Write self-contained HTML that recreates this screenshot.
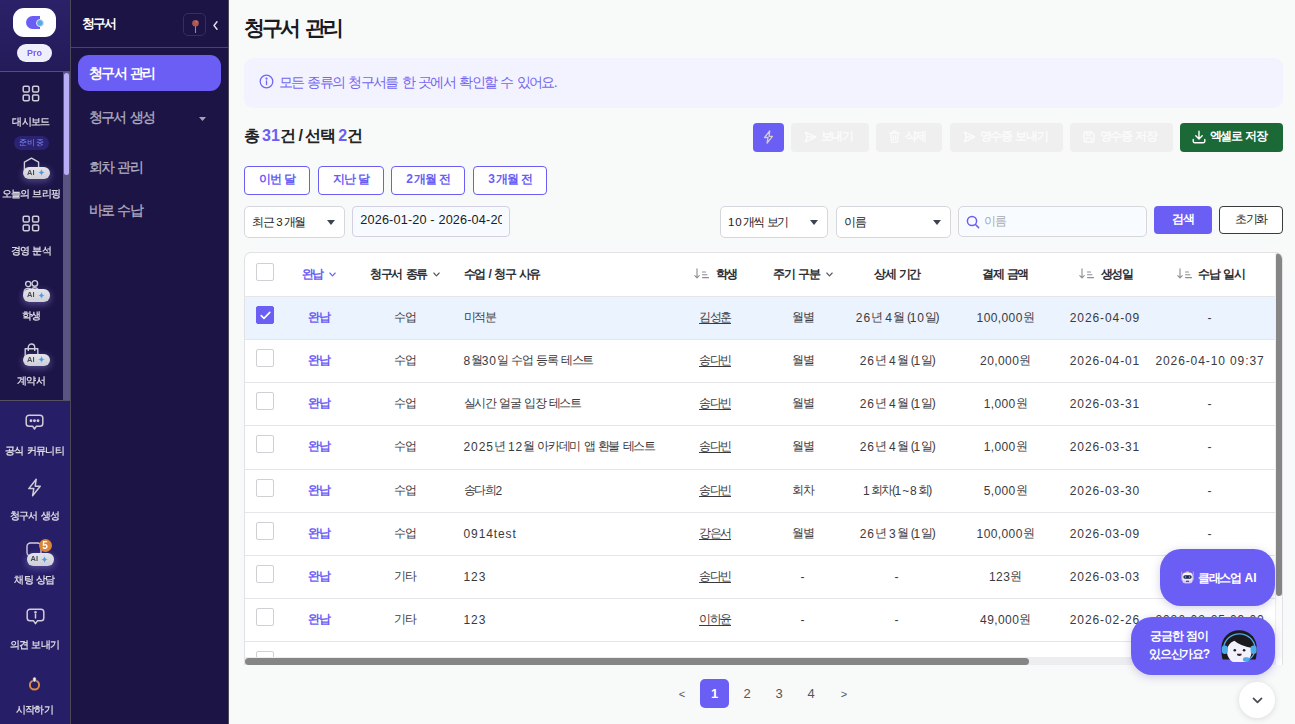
<!DOCTYPE html>
<html lang="ko">
<head>
<meta charset="utf-8">
<title>청구서 관리</title>
<style>
*{box-sizing:border-box;margin:0;padding:0}
html,body{width:1295px;height:724px;overflow:hidden}
body{position:relative;word-spacing:1.6px;background:#f8f9f9;font-family:"Liberation Sans",sans-serif;color:#222;font-size:13px}
.abs{position:absolute}
svg{display:block}
/* ---------- rail ---------- */
#rail{will-change:transform;opacity:.999;position:absolute;left:0;top:0;width:71px;height:724px;background:#1c1547;border-right:1px solid #4b4658}
#rail .top{position:absolute;left:0;top:0;width:70px;height:72px;background:linear-gradient(180deg,#2a2168 0%,#231b59 100%);border-bottom:1px solid #57525f}
#logo{position:absolute;left:13px;top:8px;width:43px;height:29px;background:#fff;border-radius:11px}
#logo i{position:absolute;left:13px;top:8px;width:14px;height:13px;background:#6b5ef5;border-radius:6.5px 0 0 6.5px}
#logo b{position:absolute;left:23px;top:10.5px;width:8px;height:8px;border-radius:50%;background:#5aa9e6;border:1px solid #dfe9fb}
#pro{position:absolute;left:17px;top:44px;width:35px;height:18px;border-radius:9px;background:#efeffd;color:#6b5ef5;font-weight:700;font-size:9px;line-height:18px;text-align:center}
#rail .track{position:absolute;left:63px;top:72px;width:7px;height:328px;background:#5a5482}
#rail .thumb{position:absolute;left:64px;top:73px;width:5px;height:102px;background:#b9aef6;border-radius:3px}
#rail .bottom{position:absolute;left:0;top:400px;width:70px;height:324px;background:#261e66;border-top:1px solid #57525f}
.ri{position:absolute;left:0;width:62px;text-align:center;color:#d9d6e1;font-weight:700;font-size:10px;letter-spacing:-.7px;word-spacing:.8px;line-height:12px;white-space:nowrap}
.ri.b{width:69px}
.ric{position:absolute}
.aib{position:absolute;width:27px;height:12.5px;border-radius:6.25px;background:linear-gradient(180deg,#e3e3e9,#cfcfd8);box-shadow:0 2px 6px 1px rgba(150,135,220,.4);font-size:7.5px;font-weight:700;color:#4a4a55;line-height:12.5px;text-align:left;padding-left:4px;letter-spacing:0}
.aib svg{position:absolute;left:14.5px;top:2.8px}
/* ---------- nav ---------- */
#nav{position:absolute;left:71px;top:0;width:158px;height:724px;background:#1b1444;border-right:1px solid #514c59}
#nav .hd{position:absolute;left:0;top:0;width:157px;height:48px;border-bottom:1px solid #4b4658}
#nav .hd .t{position:absolute;left:11px;top:16px;font-size:13px;font-weight:700;color:#fff;letter-spacing:-2.1px;line-height:16px}
#nav .pin{position:absolute;left:112px;top:13px;width:23px;height:23px;border:1px solid #362f5e;border-radius:5px}
#nav .act{position:absolute;left:7px;top:55px;width:143px;height:36px;border-radius:11px;background:#6b5ef5;color:#fff;font-weight:700;font-size:14px;line-height:36px;padding-left:11px;letter-spacing:-1.6px}
#nav .it{-webkit-text-stroke:.3px #b1adc2;position:absolute;left:17.5px;font-size:14px;color:#b1adc2;line-height:18px;letter-spacing:-1.6px}
/* ---------- main ---------- */
#main{position:absolute;left:229px;top:0;width:1066px;height:724px}
h1{position:absolute;left:15px;top:13.5px;font-size:21px;line-height:28px;font-weight:700;color:#1a1a1f;letter-spacing:-2.9px;word-spacing:3.4px;white-space:nowrap}
#banner{position:absolute;left:15px;top:58px;width:1039px;height:50px;border-radius:9px;background:#f3f2ff;color:#7367f0;font-size:14px;line-height:49.5px;padding-left:34.5px;letter-spacing:-1.6px;white-space:nowrap}
#banner svg{position:absolute;left:14.5px;top:16px}
#cnt{position:absolute;left:14.5px;top:125px;font-size:16px;font-weight:700;line-height:22px;color:#222;letter-spacing:-1.75px;white-space:nowrap}
#cnt em{font-style:normal;color:#6b5ef5;letter-spacing:0}

/* ---------- action buttons ---------- */
.btn{position:absolute;top:123px;height:29px;border-radius:4px;font-size:12px;font-weight:700;line-height:27.5px;white-space:nowrap;letter-spacing:-1.3px}
.btn.dis{background:#efefef;color:#fbfbfb}
.btn svg{position:absolute}
.btn span{position:absolute;top:0}
.qb{position:absolute;top:166px;height:29px;border:1px solid #6b5ef5;border-radius:4px;background:#fff;color:#6b5ef5;font-size:12px;font-weight:700;line-height:25px;text-align:center;letter-spacing:-1.3px;white-space:nowrap}
.sel{position:absolute;top:206px;height:32px;border:1px solid #d6d6dc;border-radius:5px;background:#fff;font-size:11.5px;line-height:30.5px;padding-left:7px;color:#222;letter-spacing:-1.5px;white-space:nowrap;overflow:hidden}
.sel:after{content:"";position:absolute;right:9px;top:13px;border:4px solid transparent;border-top:5px solid #3d4450;border-bottom:0}

/* ---------- table ---------- */
#tbl{position:absolute;left:15px;top:252px;width:1039px;height:413px;border:1px solid #e2e2e6;border-bottom:0;border-radius:7px 7px 0 0;background:#fff;overflow:hidden}
.row{position:absolute;left:0;width:1031px;height:43.13px;border-bottom:1px solid #e6e6ea;font-size:12px;color:#3a3a40;letter-spacing:-1.35px;white-space:nowrap}
.row.on{background:#ebf3ff}
.row.hd{font-weight:700;color:#2e2e33}
.c{position:absolute;top:0;height:100%;line-height:43px;text-align:center}
.c.l{text-align:left}
.row.hd .c{line-height:43px}
.row .c{line-height:41px}
.n{letter-spacing:.9px;word-spacing:0;font-style:normal}
.cb{position:absolute;left:11px;width:18px;height:18px;border:1px solid #cfcfd4;border-radius:2px;background:#fff}
.cb.on{background:#6b5ef5;border-color:#6b5ef5}
.pd{color:#6b5ef5;font-weight:700}
.u{text-decoration:underline;text-underline-offset:2px}
.car{display:inline-block;vertical-align:middle;margin-left:6px;margin-top:-1px}
.srt{display:inline-block;vertical-align:middle;margin-right:6.5px;margin-left:1.5px;margin-top:-2px}
.n2 .n{letter-spacing:.4px}
.row .n{position:relative;top:1px}
</style>
</head>
<body>
<!-- RAIL -->
<div id="rail">
  <div class="top"><div id="logo"><i></i><b></b></div><div id="pro">Pro</div></div>
  <div class="track"></div><div class="thumb"></div>
  <div class="bottom"></div>
  <!-- scroll items -->
  <svg class="ric" style="left:22px;top:84.5px" width="18" height="17" viewBox="0 0 18 17" fill="none" stroke="#d0cdd9" stroke-width="1.5"><rect x="1.2" y="1.2" width="6" height="5.8" rx="1.2"/><rect x="10.6" y="1.2" width="6" height="5.8" rx="1.2"/><rect x="1.2" y="10" width="6" height="5.8" rx="1.2"/><rect x="10.6" y="10" width="6" height="5.8" rx="1.2"/></svg>
  <div class="ri" style="top:116px">대시보드</div>
  <div class="abs" style="left:13.5px;top:136px;width:35.5px;height:14px;border-radius:7px;background:#2b2272;color:#7d8bf7;font-size:8px;line-height:14px;text-align:center;letter-spacing:-.7px;word-spacing:.5px;font-weight:400">준비 중</div>
  <svg class="ric" style="left:22.5px;top:157px" width="17" height="19" viewBox="0 0 17 19" fill="none" stroke="#d0cdd9" stroke-width="1.4" stroke-linejoin="round"><path d="M8.5 1.2 15.6 5.2V14L8.5 17.8 1.4 14V5.2Z"/></svg>
  <div class="aib" style="left:23px;top:166.5px">AI<svg width="7" height="7" viewBox="0 0 10 10"><path d="M5 0C5.4 3 7 4.6 10 5 7 5.4 5.4 7 5 10 4.6 7 3 5.4 0 5 3 4.6 4.6 3 5 0Z" fill="#4f9be8"/></svg></div>
  <div class="ri" style="top:188px">오늘의 브리핑</div>
  <svg class="ric" style="left:22px;top:214.5px" width="18" height="17" viewBox="0 0 18 17" fill="none" stroke="#d0cdd9" stroke-width="1.5"><rect x="1.2" y="1.2" width="6" height="5.8" rx="1.2"/><rect x="10.6" y="1.2" width="6" height="5.8" rx="1.2"/><rect x="1.2" y="10" width="6" height="5.8" rx="1.2"/><rect x="10.6" y="10" width="6" height="5.8" rx="1.2"/></svg>
  <div class="ri" style="top:245px">경영 분석</div>
  <svg class="ric" style="left:22.5px;top:279px" width="17" height="16" viewBox="0 0 17 16" fill="none" stroke="#d0cdd9" stroke-width="1.4"><circle cx="5.2" cy="5" r="2.6"/><circle cx="11.8" cy="4.4" r="2.8"/><path d="M1 14c0-3 2-4.6 4.2-4.6S9.4 11 9.4 14M8 13.5c0-3 1.8-4.8 3.8-4.8s4.2 1.8 4.2 4.8"/></svg>
  <div class="aib" style="left:23px;top:289px">AI<svg width="7" height="7" viewBox="0 0 10 10"><path d="M5 0C5.4 3 7 4.6 10 5 7 5.4 5.4 7 5 10 4.6 7 3 5.4 0 5 3 4.6 4.6 3 5 0Z" fill="#4f9be8"/></svg></div>
  <div class="ri" style="top:310px">학생</div>
  <svg class="ric" style="left:23.5px;top:343px" width="15" height="17" viewBox="0 0 15 17" fill="none" stroke="#d0cdd9" stroke-width="1.4" stroke-linejoin="round"><path d="M1.2 5.8h12.6v10.2H1.2z"/><path d="M4.3 8V4.2a3.2 3.2 0 0 1 6.4 0V8"/></svg>
  <div class="aib" style="left:23px;top:353.5px">AI<svg width="7" height="7" viewBox="0 0 10 10"><path d="M5 0C5.4 3 7 4.6 10 5 7 5.4 5.4 7 5 10 4.6 7 3 5.4 0 5 3 4.6 4.6 3 5 0Z" fill="#4f9be8"/></svg></div>
  <div class="ri" style="top:375px">계약서</div>

  <!-- bottom items -->
  <svg class="ric" style="left:25px;top:414px" width="19" height="17" viewBox="0 0 19 17" fill="none" stroke="#d0cdd9" stroke-width="1.5" stroke-linejoin="round"><path d="M4 1.2h11a2.8 2.8 0 0 1 2.8 2.8v5.4a2.8 2.8 0 0 1-2.8 2.8h-3.6L9.5 15 7.6 12.2H4a2.8 2.8 0 0 1-2.800-2.8V4A2.8 2.8 0 0 1 4 1.2z"/><circle cx="6" cy="6.7" r=".7" fill="#d0cdd9"/><circle cx="9.5" cy="6.7" r=".7" fill="#d0cdd9"/><circle cx="13" cy="6.7" r=".7" fill="#d0cdd9"/></svg>
  <div class="ri b" style="top:445px">공식 커뮤니티</div>
  <svg class="ric" style="left:27px;top:477.5px" width="15" height="19" viewBox="0 0 15 19" fill="none" stroke="#d0cdd9" stroke-width="1.5" stroke-linejoin="round"><path d="M9.2 1.2 1.8 10.6h5L5.6 17.8 13.2 8.2H8.2z"/></svg>
  <div class="ri b" style="top:510px">청구서 생성</div>
  <svg class="ric" style="left:25.5px;top:541.5px" width="16" height="16" viewBox="0 0 16 16" fill="none" stroke="#d0cdd9" stroke-width="1.4"><rect x="1" y="1" width="14" height="13" rx="3.5"/></svg>
  <div class="aib" style="left:26.5px;top:553px">AI<svg width="7" height="7" viewBox="0 0 10 10"><path d="M5 0C5.4 3 7 4.6 10 5 7 5.4 5.4 7 5 10 4.6 7 3 5.4 0 5 3 4.6 4.6 3 5 0Z" fill="#4f9be8"/></svg></div>
  <div class="abs" style="left:38.5px;top:539px;width:13px;height:13px;border-radius:50%;background:#d9853b;color:#fff;font-size:10px;font-weight:700;line-height:13px;text-align:center">5</div>
  <div class="ri b" style="top:574px">채팅 상담</div>
  <svg class="ric" style="left:25.5px;top:607.5px" width="19" height="18" viewBox="0 0 19 18" fill="none" stroke="#d0cdd9" stroke-width="1.5" stroke-linejoin="round"><path d="M4 1.2h11a2.8 2.8 0 0 1 2.8 2.8v6a2.8 2.8 0 0 1-2.8 2.8h-3.6L9.5 15.6 7.6 12.8H4a2.8 2.8 0 0 1-2.800-2.8V4A2.8 2.8 0 0 1 4 1.2z"/><path d="M9.5 6.6v3.4" stroke-linecap="round"/><circle cx="9.5" cy="4.3" r=".6" fill="#d0cdd9"/></svg>
  <div class="ri b" style="top:639px">의견 보내기</div>
  <svg class="ric" style="left:28px;top:676px" width="13" height="15" viewBox="0 0 13 15" fill="none"><circle cx="6.5" cy="9" r="4.6" stroke="#d8894a" stroke-width="2"/><rect x="4.8" y="1" width="3.4" height="5" rx="1.7" fill="#f4f1f6" stroke="#3a3050" stroke-width=".7"/></svg>
  <div class="ri b" style="top:704px">시작하기</div>

</div>
<!-- NAV -->
<div id="nav">
  <div class="hd"><div class="t">청구서</div><div class="pin"><svg style="position:absolute;left:6.5px;top:4px" width="9" height="16" viewBox="0 0 9 16"><path d="M4.5 8v6.5" stroke="#8d86b5" stroke-width="1.1" stroke-linecap="round"/><circle cx="4.5" cy="5.2" r="3.3" fill="#b0584f"/><circle cx="5.6" cy="3.8" r=".8" fill="#9aa0c4"/></svg></div><svg style="position:absolute;left:141.5px;top:20.5px" width="5" height="9" viewBox="0 0 5 9" fill="none" stroke="#e6e2f2" stroke-width="1.4" stroke-linecap="round" stroke-linejoin="round"><path d="M4 .8 1 4.5 4 8.2"/></svg></div>
  <div class="act">청구서 관리</div>
  <div class="it" style="top:108px">청구서 생성</div>
  <svg style="position:absolute;left:127.5px;top:117px" width="7" height="4" viewBox="0 0 7 4"><path d="M0 0h7L3.5 4z" fill="#a7a2ba"/></svg>
  <div class="it" style="top:157.5px">회차 관리</div>
  <div class="it" style="top:201px">바로 수납</div>
</div>
<!-- MAIN -->
<div id="main">
  <h1>청구서 관리</h1>
  <div id="banner"><svg width="15" height="15" viewBox="0 0 15 15" fill="none" stroke="#7367f0" stroke-width="1.3"><circle cx="7.5" cy="7.5" r="6.3"/><path d="M7.5 6.8v3.8" stroke-linecap="round"/><circle cx="7.5" cy="4.6" r=".5" fill="#7367f0"/></svg>모든 종류의 청구서를 한 곳에서 확인할 수 있어요.</div>
  <div id="cnt">총 <em>31</em>건 / 선택 <em>2</em>건</div>

  <!-- action buttons -->
  <div class="btn" style="left:524px;width:31px;background:#6b5ef5"><svg style="left:10px;top:6.5px" width="11" height="14" viewBox="0 0 12 16" fill="none" stroke="#d2cec9" stroke-width="1.5" stroke-linejoin="round"><path d="M7.4 1 1.5 8.6h3.9L4.4 15 10.5 7.2H6.6z"/></svg></div>
  <div class="btn dis" style="left:562px;width:78px"><svg style="left:12.5px;top:7.5px" width="13" height="12" viewBox="0 0 13 12" fill="none" stroke="#fbfbfb" stroke-width="1.4" stroke-linejoin="round" stroke-linecap="round"><path d="M1.5 1.2 11.8 6 1.5 10.8 3.3 6z"/><path d="M3.3 6h5"/></svg><span style="left:29.5px">보내기</span></div>
  <div class="btn dis" style="left:647px;width:66px"><svg style="left:12.5px;top:7px" width="11" height="13" viewBox="0 0 11 13" fill="none" stroke="#fbfbfb" stroke-width="1.3" stroke-linecap="round" stroke-linejoin="round"><path d="M.8 3h9.4M3.8 3V1.2h3.4V3M1.8 3l.5 8.4a1 1 0 0 0 1 .9h4.4a1 1 0 0 0 1-.9L9.2 3M4.3 5.5v4.5M6.7 5.5v4.5"/></svg><span style="left:28.5px">삭제</span></div>
  <div class="btn dis" style="left:721px;width:113px"><svg style="left:12.5px;top:7.5px" width="13" height="12" viewBox="0 0 13 12" fill="none" stroke="#fbfbfb" stroke-width="1.4" stroke-linejoin="round" stroke-linecap="round"><path d="M1.5 1.2 11.8 6 1.5 10.8 3.3 6z"/><path d="M3.3 6h5"/></svg><span style="left:29.5px">영수증 보내기</span></div>
  <div class="btn dis" style="left:841px;width:103px"><svg style="left:12.5px;top:7.5px" width="12" height="12" viewBox="0 0 12 12" fill="none" stroke="#fbfbfb" stroke-width="1.3" stroke-linejoin="round"><path d="M1 2.2A1.2 1.2 0 0 1 2.2 1h6.2L11 3.6v6.2A1.2 1.2 0 0 1 9.8 11H2.2A1.2 1.2 0 0 1 1 9.8z"/><path d="M3.5 1v2.8h4V1M3.3 11V7.2h5.4V11"/></svg><span style="left:29.5px">영수증 저장</span></div>
  <div class="btn" style="left:951px;width:103px;background:#1a6937;color:#fff"><svg style="left:12px;top:6.5px" width="14" height="14" viewBox="0 0 14 14" fill="none" stroke="#fff" stroke-width="1.4" stroke-linecap="round" stroke-linejoin="round"><path d="M7 1.2v7.6M3.8 5.8 7 9l3.200-3.2M1.2 9.5v1.8a1.5 1.5 0 0 0 1.5 1.5h8.6a1.5 1.5 0 0 0 1.500-1.5V9.5"/></svg><span style="left:29.5px">엑셀로 저장</span></div>
  <!-- quick buttons -->
  <div class="qb" style="left:15px;width:66px">이번 달</div>
  <div class="qb" style="left:89px;width:66px">지난 달</div>
  <div class="qb" style="left:162px;width:74px"><i class="n">2</i>개월 전</div>
  <div class="qb" style="left:244px;width:74px"><i class="n">3</i>개월 전</div>
  <!-- filters -->
  <div class="sel" style="left:15px;width:101px">최근 <i class="n">3</i>개월</div>
  <div class="abs" style="left:123px;top:206px;width:158px;height:31px;border:1px solid #d3d0e6;border-radius:4px;background:#f7fbff"><div style="position:absolute;left:7.3px;top:0;width:141.5px;height:29px;overflow:hidden;font-size:12.7px;line-height:27.5px;color:#1c1c22;white-space:nowrap;letter-spacing:.15px;word-spacing:0">2026-01-20 - 2026-04-20</div></div>
  <div class="sel" style="left:491px;width:108px"><i class="n">10</i>개씩 보기</div>
  <div class="sel" style="left:607px;width:115px">이름</div>
  <div class="abs" style="left:729px;top:206px;width:189px;height:31px;border:1px solid #d6d6dc;border-radius:5px;background:#f8fbff;font-size:12px;line-height:29px;padding-left:25px;color:#a9a9b0;letter-spacing:-1.3px"><svg style="position:absolute;left:7px;top:8px" width="14" height="14" viewBox="0 0 14 14" fill="none" stroke="#6b5ef5" stroke-width="1.5" stroke-linecap="round"><circle cx="6" cy="6" r="4.6"/><path d="M9.5 9.5 12.6 12.6"/></svg>이름</div>
  <div class="abs" style="left:925px;top:206px;width:58px;height:28px;border-radius:4px;background:#6b5ef5;color:#fff;font-weight:700;font-size:12px;line-height:26px;text-align:center;letter-spacing:-1.3px">검색</div>
  <div class="abs" style="left:990px;top:206px;width:64px;height:28px;border-radius:4px;background:#fff;border:1px solid #3a3a3f;color:#222;font-size:12px;line-height:25px;text-align:center;letter-spacing:-1.3px">초기화</div>
<div id="tbl">
<div class="row hd" style="top:0;height:44px">
<div class="cb" style="top:10px"></div>
<div class="c" style="left:40px;width:68px"><span class="pd">완납</span><svg class="car" width="7" height="5" viewBox="0 0 7 5" fill="none" stroke="#6b5ef5" stroke-width="1.1" stroke-linecap="round" stroke-linejoin="round"><path d="M.8 1 3.5 3.8 6.2 1"/></svg></div>
<div class="c" style="left:108px;width:104px">청구서 종류<svg class="car" width="7" height="5" viewBox="0 0 7 5" fill="none" stroke="#55555c" stroke-width="1.1" stroke-linecap="round" stroke-linejoin="round"><path d="M.8 1 3.5 3.8 6.2 1"/></svg></div>
<div class="c l" style="left:212px;width:203px;padding-left:6.5px">수업 / 청구 사유</div>
<div class="c" style="left:415px;width:110px"><svg class="srt" width="15" height="11" viewBox="0 0 15 11" fill="none" stroke="#8d8d93" stroke-width="1.1" stroke-linecap="round" stroke-linejoin="round"><path d="M3 .8v9M.8 7.6 3 10l2.200-2.4M8.5 4h3M8.5 6.8h4.5M8.5 9.6h6"/></svg>학생</div>
<div class="c" style="left:525px;width:66px">주기 구분<svg class="car" width="7" height="5" viewBox="0 0 7 5" fill="none" stroke="#55555c" stroke-width="1.1" stroke-linecap="round" stroke-linejoin="round"><path d="M.8 1 3.5 3.8 6.2 1"/></svg></div>
<div class="c" style="left:591px;width:122px">상세 기간</div>
<div class="c" style="left:713px;width:94px">결제 금액</div>
<div class="c" style="left:807px;width:106px"><svg class="srt" width="15" height="11" viewBox="0 0 15 11" fill="none" stroke="#8d8d93" stroke-width="1.1" stroke-linecap="round" stroke-linejoin="round"><path d="M3 .8v9M.8 7.6 3 10l2.200-2.4M8.5 4h3M8.5 6.8h4.5M8.5 9.6h6"/></svg>생성일</div>
<div class="c" style="left:904px;width:122px"><svg class="srt" width="15" height="11" viewBox="0 0 15 11" fill="none" stroke="#8d8d93" stroke-width="1.1" stroke-linecap="round" stroke-linejoin="round"><path d="M3 .8v9M.8 7.6 3 10l2.200-2.4M8.5 4h3M8.5 6.8h4.5M8.5 9.6h6"/></svg>수납 일시</div>
</div>
<div class="row on" style="top:44.00px">
<div class="cb on" style="top:9px"><svg style="position:absolute;left:2.5px;top:3.5px" width="11" height="9" viewBox="0 0 11 9" fill="none" stroke="#fff" stroke-width="1.6" stroke-linecap="round" stroke-linejoin="round"><path d="M1.2 4.6 4 7.4 9.8 1.4"/></svg></div>
<div class="c" style="left:40px;width:68px"><span class="pd">완납</span></div>
<div class="c" style="left:108px;width:104px">수업</div>
<div class="c l" style="left:212px;width:203px;padding-left:6.5px">미적분</div>
<div class="c" style="left:415px;width:110px"><span class="u">김성훈</span></div>
<div class="c" style="left:525px;width:66px">월별</div>
<div class="c" style="left:591px;width:122px"><i class="n">26</i>년 <i class="n">4</i>월 (<i class="n">10</i>일)</div>
<div class="c n2" style="left:713px;width:94px"><i class="n">100,000</i>원</div>
<div class="c" style="left:807px;width:106px"><i class="n">2026-04-09</i></div>
<div class="c" style="left:904px;width:122px"><i class="n">-</i></div>
</div>
<div class="row" style="top:87.13px">
<div class="cb" style="top:9px"></div>
<div class="c" style="left:40px;width:68px"><span class="pd">완납</span></div>
<div class="c" style="left:108px;width:104px">수업</div>
<div class="c l" style="left:212px;width:203px;padding-left:6.5px"><i class="n">8</i>월<i class="n">30</i>일 수업 등록 테스트</div>
<div class="c" style="left:415px;width:110px"><span class="u">송다빈</span></div>
<div class="c" style="left:525px;width:66px">월별</div>
<div class="c" style="left:591px;width:122px"><i class="n">26</i>년 <i class="n">4</i>월 (<i class="n">1</i>일)</div>
<div class="c n2" style="left:713px;width:94px"><i class="n">20,000</i>원</div>
<div class="c" style="left:807px;width:106px"><i class="n">2026-04-01</i></div>
<div class="c" style="left:904px;width:122px"><i class="n">2026-04-10 09:37</i></div>
</div>
<div class="row" style="top:130.26px">
<div class="cb" style="top:9px"></div>
<div class="c" style="left:40px;width:68px"><span class="pd">완납</span></div>
<div class="c" style="left:108px;width:104px">수업</div>
<div class="c l" style="left:212px;width:203px;padding-left:6.5px">실시간 얼굴 입장 테스트</div>
<div class="c" style="left:415px;width:110px"><span class="u">송다빈</span></div>
<div class="c" style="left:525px;width:66px">월별</div>
<div class="c" style="left:591px;width:122px"><i class="n">26</i>년 <i class="n">4</i>월 (<i class="n">1</i>일)</div>
<div class="c n2" style="left:713px;width:94px"><i class="n">1,000</i>원</div>
<div class="c" style="left:807px;width:106px"><i class="n">2026-03-31</i></div>
<div class="c" style="left:904px;width:122px"><i class="n">-</i></div>
</div>
<div class="row" style="top:173.39px">
<div class="cb" style="top:9px"></div>
<div class="c" style="left:40px;width:68px"><span class="pd">완납</span></div>
<div class="c" style="left:108px;width:104px">수업</div>
<div class="c l" style="left:212px;width:203px;padding-left:6.5px"><i class="n">2025</i>년 <i class="n">12</i>월 아카데미 앱 환불 테스트</div>
<div class="c" style="left:415px;width:110px"><span class="u">송다빈</span></div>
<div class="c" style="left:525px;width:66px">월별</div>
<div class="c" style="left:591px;width:122px"><i class="n">26</i>년 <i class="n">4</i>월 (<i class="n">1</i>일)</div>
<div class="c n2" style="left:713px;width:94px"><i class="n">1,000</i>원</div>
<div class="c" style="left:807px;width:106px"><i class="n">2026-03-31</i></div>
<div class="c" style="left:904px;width:122px"><i class="n">-</i></div>
</div>
<div class="row" style="top:216.52px">
<div class="cb" style="top:9px"></div>
<div class="c" style="left:40px;width:68px"><span class="pd">완납</span></div>
<div class="c" style="left:108px;width:104px">수업</div>
<div class="c l" style="left:212px;width:203px;padding-left:6.5px">송다희<i class="n">2</i></div>
<div class="c" style="left:415px;width:110px"><span class="u">송다빈</span></div>
<div class="c" style="left:525px;width:66px">회차</div>
<div class="c" style="left:591px;width:122px"><i class="n">1</i>회차(<i class="n">1~8</i>회)</div>
<div class="c n2" style="left:713px;width:94px"><i class="n">5,000</i>원</div>
<div class="c" style="left:807px;width:106px"><i class="n">2026-03-30</i></div>
<div class="c" style="left:904px;width:122px"><i class="n">-</i></div>
</div>
<div class="row" style="top:259.65px">
<div class="cb" style="top:9px"></div>
<div class="c" style="left:40px;width:68px"><span class="pd">완납</span></div>
<div class="c" style="left:108px;width:104px">수업</div>
<div class="c l" style="left:212px;width:203px;padding-left:6.5px"><i class="n">0914test</i></div>
<div class="c" style="left:415px;width:110px"><span class="u">강은서</span></div>
<div class="c" style="left:525px;width:66px">월별</div>
<div class="c" style="left:591px;width:122px"><i class="n">26</i>년 <i class="n">3</i>월 (<i class="n">1</i>일)</div>
<div class="c n2" style="left:713px;width:94px"><i class="n">100,000</i>원</div>
<div class="c" style="left:807px;width:106px"><i class="n">2026-03-09</i></div>
<div class="c" style="left:904px;width:122px"><i class="n">-</i></div>
</div>
<div class="row" style="top:302.78px">
<div class="cb" style="top:9px"></div>
<div class="c" style="left:40px;width:68px"><span class="pd">완납</span></div>
<div class="c" style="left:108px;width:104px">기타</div>
<div class="c l" style="left:212px;width:203px;padding-left:6.5px"><i class="n">123</i></div>
<div class="c" style="left:415px;width:110px"><span class="u">송다빈</span></div>
<div class="c" style="left:525px;width:66px"><i class="n">-</i></div>
<div class="c" style="left:591px;width:122px"><i class="n">-</i></div>
<div class="c n2" style="left:713px;width:94px"><i class="n">123</i>원</div>
<div class="c" style="left:807px;width:106px"><i class="n">2026-03-03</i></div>
<div class="c" style="left:904px;width:122px"><i class="n">-</i></div>
</div>
<div class="row" style="top:345.91px">
<div class="cb" style="top:9px"></div>
<div class="c" style="left:40px;width:68px"><span class="pd">완납</span></div>
<div class="c" style="left:108px;width:104px">기타</div>
<div class="c l" style="left:212px;width:203px;padding-left:6.5px"><i class="n">123</i></div>
<div class="c" style="left:415px;width:110px"><span class="u">이하윤</span></div>
<div class="c" style="left:525px;width:66px"><i class="n">-</i></div>
<div class="c" style="left:591px;width:122px"><i class="n">-</i></div>
<div class="c n2" style="left:713px;width:94px"><i class="n">49,000</i>원</div>
<div class="c" style="left:807px;width:106px"><i class="n">2026-02-26</i></div>
<div class="c" style="left:904px;width:122px"><i class="n">2026-02-25 09:00</i></div>
</div>
<div class="row" style="top:389.04px">
<div class="cb" style="top:9px"></div>
</div>
<div class="abs" style="left:1030px;top:0;width:8px;height:405px;background:#fbfbfb;border-left:1px solid #ededf0"></div>
<div class="abs" style="left:1030.5px;top:0;width:6.5px;height:343px;background:#858585;border-radius:3.2px"></div>
<div class="abs" style="left:0;top:404px;width:1031px;height:8px;background:#ededf0"></div>
<div class="abs" style="left:0;top:404.5px;width:784px;height:7px;background:#858585;border-radius:3.5px"></div>
</div>
<div class="abs" style="left:443px;top:679px;width:180px;height:29px;font-size:13px;color:#55555c;line-height:29px;word-spacing:0">
 <span class="abs" style="left:0;width:20px;text-align:center;font-size:11px;top:1px">&lt;</span>
 <span class="abs" style="left:28px;width:29px;height:29px;border-radius:5px;background:#6b5ef5;color:#fff;font-weight:700;text-align:center">1</span>
 <span class="abs" style="left:65px;width:20px;text-align:center">2</span>
 <span class="abs" style="left:97px;width:20px;text-align:center">3</span>
 <span class="abs" style="left:129px;width:20px;text-align:center">4</span>
 <span class="abs" style="left:162px;width:20px;text-align:center;font-size:11px;top:1px">&gt;</span>
</div>
</div>

<!-- FLOATS -->
<div class="abs" style="left:1160px;top:549px;width:115px;height:57px;border-radius:21px;background:#6b5ef5;box-shadow:0 2px 8px rgba(80,70,160,.25);color:#fff;font-weight:700;font-size:12px;line-height:58.5px;letter-spacing:-1.3px;white-space:nowrap">
  <svg style="position:absolute;left:20.5px;top:21.5px" width="13" height="13" viewBox="0 0 13 13"><defs><linearGradient id="rg" x1="0" y1="0" x2="0" y2="1"><stop offset=".55" stop-color="#f3f3fa"/><stop offset="1" stop-color="#cbb9f6"/></linearGradient></defs><rect x=".2" y=".6" width="1" height="4.2" fill="#e9a84e"/><rect x="11.8" y=".6" width="1" height="4.2" fill="#e9a84e"/><rect x="0" y="4.8" width="1.6" height="4.4" rx=".6" fill="#dd9a48"/><rect x="11.4" y="4.8" width="1.6" height="4.4" rx=".6" fill="#dd9a48"/><rect x="5" y=".2" width="3" height="1.8" rx=".8" fill="#f0a445"/><rect x="1.3" y="1.4" width="10.4" height="11.2" rx="3.6" fill="url(#rg)"/><rect x="2.3" y="4.3" width="8.4" height="3.5" rx="1.7" fill="#1d2250"/><circle cx="4.5" cy="6" r=".8" fill="#5ecbff"/><circle cx="8.5" cy="6" r=".8" fill="#5ecbff"/><rect x="4.9" y="9.7" width="3.2" height="1.1" rx=".4" fill="#2a2a4a"/></svg>
  <span style="position:absolute;left:38px;top:0">클래스업 <i class="n" style="letter-spacing:.2px">AI</i></span>
</div>
<div class="abs" style="left:1131px;top:617px;width:144px;height:58px;border-radius:21px;background:#6b5ef5;box-shadow:0 2px 8px rgba(80,70,160,.25);color:#fff;font-weight:700;font-size:12px;letter-spacing:-1.3px;white-space:nowrap">
  <div style="position:absolute;left:8px;top:10px;width:80px;text-align:center;line-height:18px">궁금한 점이<br>있으신가요?</div>
  <svg style="position:absolute;left:90px;top:13px" width="36" height="32" viewBox="0 0 36 32"><path d="M1.6 29.5Q.4 26 .4 17.5A17.7 17.3 0 0 1 35.8 17.5Q35.8 26 34.6 29.5z" fill="#1d1a1e"/><circle cx="18.3" cy="21.5" r="12.3" fill="#f3f2fc"/><path d="M5 20Q6.5 13.5 13.3 10.8Q20 16.6 32 17.9V6H5z" fill="#1d1a1e"/><circle cx="13.8" cy="20.2" r="1.3" fill="#1d1a1e"/><circle cx="23.1" cy="20.2" r="1.3" fill="#1d1a1e"/><path d="M15.8 23.8h5a2.5 2.3 0 0 1-5 0z" fill="#3a2020"/><path d="M2.7 17.5A15.7 14.9 0 0 1 34 17.5" fill="none" stroke="#4fa8e8" stroke-width="1.3"/><rect x=".8" y="15.5" width="6" height="8.4" rx="2.8" fill="#4fa8e8"/><rect x="29.6" y="15.5" width="6" height="8.4" rx="2.8" fill="#4fa8e8"/><path d="M33 23.5Q31 28.5 26.5 29.5" fill="none" stroke="#4fa8e8" stroke-width="1.2"/><rect x="21.9" y="27.2" width="6.6" height="4.6" rx="2.3" fill="#4fa8e8"/></svg>
</div>
<div class="abs" style="left:1239px;top:682px;width:36px;height:36px;border-radius:50%;background:#fff;box-shadow:0 1px 6px rgba(0,0,0,.13)"><svg style="position:absolute;left:12.5px;top:15px" width="11" height="7" viewBox="0 0 11 7" fill="none" stroke="#4a4a50" stroke-width="1.7" stroke-linecap="round" stroke-linejoin="round"><path d="M1.5 1.3 5.5 5.3 9.5 1.3"/></svg></div>
</body>
</html>
